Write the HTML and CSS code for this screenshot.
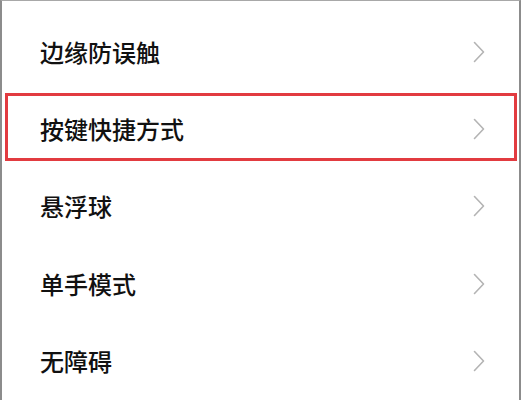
FILE: index.html
```html
<!DOCTYPE html>
<html lang="zh-CN">
<head>
<meta charset="utf-8">
<link rel="stylesheet" href="styles.css">
</head>
<body>
<div class="frame">
  <ul class="list">
    <li class="row"><span class="label">边缘防误触</span><svg class="chev" viewBox="0 0 12 22" width="12" height="22"><path d="M1.5 1.5 L10.5 11 L1.5 20.5" /></svg></li>
    <li class="row"><span class="label">按键快捷方式</span><svg class="chev" viewBox="0 0 12 22" width="12" height="22"><path d="M1.5 1.5 L10.5 11 L1.5 20.5" /></svg></li>
    <li class="row"><span class="label">悬浮球</span><svg class="chev" viewBox="0 0 12 22" width="12" height="22"><path d="M1.5 1.5 L10.5 11 L1.5 20.5" /></svg></li>
    <li class="row"><span class="label">单手模式</span><svg class="chev" viewBox="0 0 12 22" width="12" height="22"><path d="M1.5 1.5 L10.5 11 L1.5 20.5" /></svg></li>
    <li class="row"><span class="label">无障碍</span><svg class="chev" viewBox="0 0 12 22" width="12" height="22"><path d="M1.5 1.5 L10.5 11 L1.5 20.5" /></svg></li>
  </ul>
  <div class="highlight"></div>
</div>
</body>
</html>
```

FILE: styles.css
```css
html, body {
  margin: 0;
  padding: 0;
  background: #ffffff;
}
.frame {
  position: relative;
  width: 517px;
  height: 399px;
  border-top: 1px solid #a8a8a8;
  border-left: 2px solid #8c8c8c;
  border-right: 2px solid #8c8c8c;
  overflow: hidden;
}
.list {
  list-style: none;
  margin: 0;
  padding: 12px 0 0 0;
}
.row {
  height: 77.4px;
  display: flex;
  align-items: center;
  justify-content: space-between;
  padding-left: 38px;
  padding-right: 34px;
}
.label {
  font-family: "Noto Sans CJK SC", "Noto Sans", sans-serif;
  font-size: 24px;
  font-weight: 500;
  line-height: 1;
  color: #111111;
}
.chev {
  display: block;
  fill: none;
  stroke: #b4b4b4;
  stroke-width: 1.6;
  stroke-linecap: round;
  stroke-linejoin: round;
}
.highlight {
  position: absolute;
  left: 3px;
  top: 92px;
  width: 506px;
  height: 62px;
  border: 3px solid #e23b40;
}
```
